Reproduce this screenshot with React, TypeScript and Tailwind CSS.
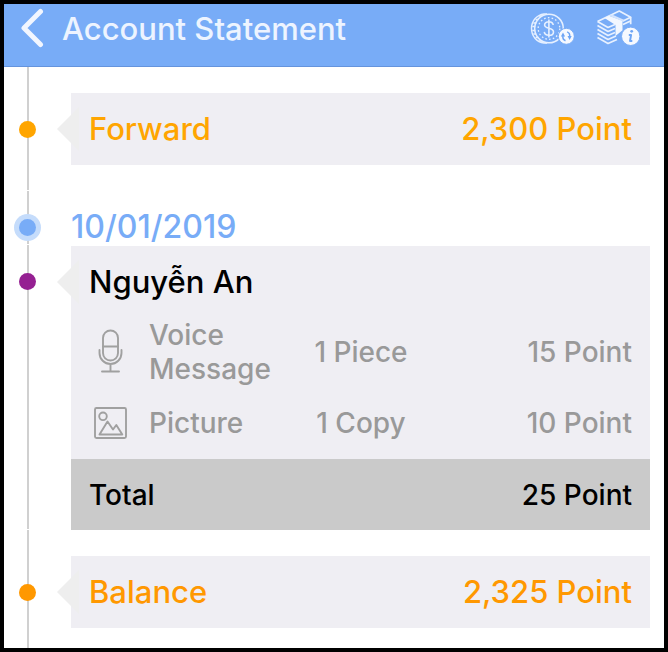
import type { ReactNode } from 'react';

interface DetailRow {
  id: string;
  icon: ReactNode;
  name: string;
  quantity: string;
  points: string;
}

function BackIcon() {
  return (
    <svg width="24" height="40" viewBox="0 0 24 40" fill="none" stroke="#f2f6ff" strokeWidth="5" strokeLinecap="round" strokeLinejoin="round">
      <path d="M20.500 3.500 4 20l16.500 16.500" />
    </svg>
  );
}

function CoinIcon() {
  return (
    <svg width="44" height="34" viewBox="0 0 44 34" fill="none" stroke="#e6f0ff">
      {/* coin edge */}
      <path d="M17 2h-3C6.500 3 1.500 9 1.500 16.500S6.500 30 14 31h3" strokeWidth="1.400" />
      <path d="M9 4h3M5.500 7.500h3M3.300 11h3M2.300 14.500h3M2.300 18.500h3M3.300 22h3M5.500 25.500h3M9 29h3" strokeWidth="1.300" />
      <circle cx="19" cy="16.500" r="14.300" strokeWidth="1.500" />
      <circle cx="19" cy="16.500" r="10.800" strokeWidth="1.300" strokeDasharray="1.600 2.200" />
      {/* dollar sign */}
      <path d="M23.200 13c-.3-2.200-2-3.200-4.300-3.200-2.500 0-4.300 1.100-4.300 3.200 0 4.200 8.900 2.500 8.900 6.900 0 2.200-1.900 3.400-4.600 3.400-2.600 0-4.400-1.200-4.600-3.400M18.900 7.500v18" strokeWidth="1.600" />
      <circle cx="36.300" cy="24.300" r="8" fill="#f6f9ff" stroke="#78acf7" strokeWidth="1" />
      <path d="M35.500 28.700c-2-.8-2.900-2.500-2.600-4.700M37.100 19.900c2 .8 2.900 2.500 2.600 4.700" stroke="#6ea5f5" strokeWidth="1.500" />
      <path d="M30.900 24.500 33 20.500l2.100 4zM37.500 24.100h4.200l-2.100 4z" fill="#6ea5f5" stroke="none" />
    </svg>
  );
}

function LedgerIcon() {
  return (
    <svg width="44" height="40" viewBox="0 0 44 40" fill="none" stroke="#e8f1ff" strokeWidth="1.700" strokeLinejoin="round">
      <path d="M1.500 12.500 23.300 2l11.400 6.200-8.200 4M1.500 12.500 12 18.500l7-3" />
      <path d="M1.500 16.500 12 22.500l7-3M1.500 20.500 12 26.500l7-3M1.500 24.500 12 30.500l8-3.500M1.500 28.500 12 34.500l9-4" />
      <path d="M34.700 8.200v7M27 15.500l7.500-3.500" />
      {/* band around the stack */}
      <path d="M8.500 9 13 6.800l13.500 5v9.500L19.500 27V16z" fill="#f2f7ff" stroke="none" />
      <path d="M13 6.800l3-1.300L28.500 11l-2 1.200z" fill="#d3e4fe" stroke="none" />
      <circle cx="34.700" cy="27.300" r="9.200" fill="#f6f9ff" stroke="#78acf7" strokeWidth="1" />
      <circle cx="35.700" cy="22.300" r="1.400" fill="#6ea5f5" stroke="none" />
      <path d="M32.800 26h2.300l-1.100 6h2.300" stroke="#6ea5f5" strokeWidth="1.900" />
    </svg>
  );
}

function MicIcon() {
  return (
    <svg width="36" height="46" viewBox="0 0 36 46" fill="none" stroke="#a0a0a0" strokeWidth="1.900" strokeLinecap="round">
      <rect x="11" y="1.500" width="15" height="30" rx="7.500" />
      <path d="M11 17.500h15M7.500 21v3a11 11 0 0 0 22 0v-3M18.500 35v7.500M10 42.500h17" />
    </svg>
  );
}

function PictureIcon() {
  return (
    <svg width="36" height="34" viewBox="0 0 36 34" fill="none" stroke="#a0a0a0" strokeWidth="1.900" strokeLinejoin="round">
      <rect x="3" y="2" width="31" height="30" rx="1.500" />
      <circle cx="11" cy="10.300" r="3.800" />
      <path d="M7.500 28.500 15.500 15.500l5.500 8 3.300-4.500L30.300 28.500z" />
    </svg>
  );
}

const rows: DetailRow[] = [
  { id: 'voice', icon: <MicIcon />, name: 'Voice Message', quantity: '1 Piece', points: '15 Point' },
  { id: 'picture', icon: <PictureIcon />, name: 'Picture', quantity: '1 Copy', points: '10 Point' },
];

// Vertical line with the marker on top of it
function Rail({ children, className }: { children: ReactNode; className: string }) {
  return (
    <div className={`relative flex w-[47px] shrink-0 justify-center ${className}`}>
      <div className="absolute top-0 bottom-px left-1/2 w-0.5 -translate-x-1/2 bg-[#d0d0d0]" />
      {children}
    </div>
  );
}

function Arrow() {
  return (
    <svg className="absolute top-3.5 -left-3.5" width="22" height="44" viewBox="0 0 22 44">
      <path d="M0 22 22 0v44z" fill="#eeeeee" />
    </svg>
  );
}

function SummaryItem({ label, value, tone, dot }: { label: string; value: string; tone: string; dot: string }) {
  return (
    <li className="flex">
      <Rail className="items-center">
        <span className={`relative size-[17px] rounded-full ${dot}`} />
      </Rail>
      <div className="flex-1 py-[26px] pr-3.5 pl-5">
        <div className={`relative flex h-[72px] items-center justify-between bg-[#efeef3] px-[18px] text-[31px] ${tone}`}>
          <Arrow />
          <span className="relative">{label}</span>
          <span>{value}</span>
        </div>
      </div>
    </li>
  );
}

export default function App() {
  return (
    <div className="h-screen overflow-hidden border-4 border-black bg-white font-['Inter','Liberation_Sans',sans-serif] font-medium text-black">
      <header className="flex h-[63px] items-start border-b border-[#6594dd] bg-[#78acf7] pr-6 pl-4">
        <button type="button" aria-label="Back" className="mt-1">
          <BackIcon />
        </button>
        <h1 className="ml-[18px] flex-1 text-[31px] leading-[50px] font-medium text-[#edf4ff]">Account Statement</h1>
        <div className="flex items-center gap-[22px] pt-[5px]">
          <button type="button" aria-label="Convert points">
            <CoinIcon />
          </button>
          <button type="button" aria-label="Statement info">
            <LedgerIcon />
          </button>
        </div>
      </header>

      <ol>
        <SummaryItem label="Forward" value="2,300 Point" tone="text-[#ffa500]" dot="bg-[#ffa500]" />

        <li className="flex h-[54px]">
          <Rail className="items-end pb-1">
            <span className="relative flex size-[27px] items-center justify-center rounded-full bg-[#c5dcfb]">
              <span className="size-[17px] rounded-full bg-[#78acf7]" />
            </span>
          </Rail>
          <h2 className="self-end pl-5 text-[32px] leading-9 font-medium text-[#78acf7]">10/01/2019</h2>
        </li>

        <li className="flex">
          <Rail className="items-start pt-7">
            <span className="relative size-[17px] rounded-full bg-[#952092]" />
          </Rail>
          <div className="min-w-0 flex-1 pt-px pr-3.5 pl-5">
            <section className="relative bg-[#efeef3]">
              <Arrow />
              <h3 className="relative px-[18px] text-[31px] leading-[72px] font-medium">Nguyễn An</h3>
              <table className="w-full table-fixed text-[28px] leading-[34px] text-[#999999]">
                <colgroup>
                  <col className="w-[78px]" />
                  <col className="w-[140px]" />
                  <col className="w-[144px]" />
                  <col />
                </colgroup>
                <tbody>
                  {rows.map((row) => (
                    <tr key={row.id} className="last:h-[73px]">
                      <td className="pl-[21px] align-middle">{row.icon}</td>
                      <td>{row.name}</td>
                      <td className="text-center">{row.quantity}</td>
                      <td className="pr-[18px] text-right">{row.points}</td>
                    </tr>
                  ))}
                </tbody>
              </table>
              <div className="flex h-[71px] items-center justify-between bg-[#cacaca] px-[18px] text-[28px]">
                <span>Total</span>
                <span>25 Point</span>
              </div>
            </section>
          </div>
        </li>

        <SummaryItem label="Balance" value="2,325 Point" tone="text-[#ff9800]" dot="bg-[#ff9800]" />
      </ol>
    </div>
  );
}
